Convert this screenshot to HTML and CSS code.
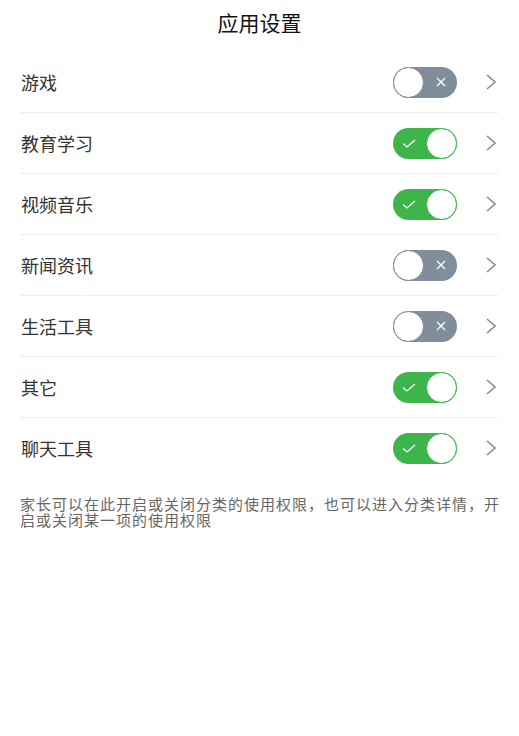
FILE: index.html
```html
<!DOCTYPE html>
<html lang="zh">
<head>
    <meta charset="UTF-8">
    <meta name="viewport" content="width=device-width, initial-scale=1.0">
    <title>应用设置</title>
    <link rel="stylesheet" href="styles.css">
</head>
<body>
    <h1 class="title">应用设置</h1>

    <div class="list">
        <div class="row">
            <span class="label">游戏</span>
            <span class="switch off"><span class="mark"><svg viewBox="0 0 10 10"><path d="M1 1 L9 9 M9 1 L1 9" /></svg></span><span class="knob"></span></span>
            <svg class="arrow" viewBox="0 0 10 16"><path d="M1 1 L9 8 L1 15" /></svg>
        </div>
        <div class="row">
            <span class="label">教育学习</span>
            <span class="switch on"><span class="mark"><svg viewBox="0 0 14 9"><path d="M1 4.5 L5 8 L13 1" /></svg></span><span class="knob"></span></span>
            <svg class="arrow" viewBox="0 0 10 16"><path d="M1 1 L9 8 L1 15" /></svg>
        </div>
        <div class="row">
            <span class="label">视频音乐</span>
            <span class="switch on"><span class="mark"><svg viewBox="0 0 14 9"><path d="M1 4.5 L5 8 L13 1" /></svg></span><span class="knob"></span></span>
            <svg class="arrow" viewBox="0 0 10 16"><path d="M1 1 L9 8 L1 15" /></svg>
        </div>
        <div class="row">
            <span class="label">新闻资讯</span>
            <span class="switch off"><span class="mark"><svg viewBox="0 0 10 10"><path d="M1 1 L9 9 M9 1 L1 9" /></svg></span><span class="knob"></span></span>
            <svg class="arrow" viewBox="0 0 10 16"><path d="M1 1 L9 8 L1 15" /></svg>
        </div>
        <div class="row">
            <span class="label">生活工具</span>
            <span class="switch off"><span class="mark"><svg viewBox="0 0 10 10"><path d="M1 1 L9 9 M9 1 L1 9" /></svg></span><span class="knob"></span></span>
            <svg class="arrow" viewBox="0 0 10 16"><path d="M1 1 L9 8 L1 15" /></svg>
        </div>
        <div class="row">
            <span class="label">其它</span>
            <span class="switch on"><span class="mark"><svg viewBox="0 0 14 9"><path d="M1 4.5 L5 8 L13 1" /></svg></span><span class="knob"></span></span>
            <svg class="arrow" viewBox="0 0 10 16"><path d="M1 1 L9 8 L1 15" /></svg>
        </div>
        <div class="row last">
            <span class="label">聊天工具</span>
            <span class="switch on"><span class="mark"><svg viewBox="0 0 14 9"><path d="M1 4.5 L5 8 L13 1" /></svg></span><span class="knob"></span></span>
            <svg class="arrow" viewBox="0 0 10 16"><path d="M1 1 L9 8 L1 15" /></svg>
        </div>
    </div>

    <p class="note">家长可以在此开启或关闭分类的使用权限，也可以进入分类详情，开启或关闭某一项的使用权限</p>
</body>
</html>
```

FILE: styles.css
```css
body {
    margin: 0;
    background: #fff;
    font-family: "Noto Sans CJK SC", "Noto Sans", sans-serif;
    color: #222;
}

.title {
    margin: 0;
    padding-top: 8px;
    height: 44px;
    line-height: 28px;
    font-size: 21px;
    font-weight: normal;
    text-align: center;
    color: #111;
}

.list {
    padding: 0 21px 0 20px;
}

.row {
    display: flex;
    align-items: center;
    height: 60px;
    border-bottom: 1px solid #eee;
}

.row.last {
    border-bottom: none;
}

.label {
    flex: 1;
    padding-left: 1px;
    font-size: 18px;
    color: #333;
}

.switch {
    position: relative;
    display: flex;
    align-items: center;
    width: 64px;
    height: 31px;
    border-radius: 16px;
    box-sizing: border-box;
}

.switch.off {
    background: #7f8e9a;
    justify-content: flex-end;
}

.switch.on {
    background: #3db54a;
    justify-content: flex-start;
}

.knob {
    position: absolute;
    top: 0;
    width: 31px;
    height: 31px;
    border-radius: 50%;
    background: #fff;
    box-sizing: border-box;
}

.switch.off .knob {
    left: 0;
    border: 1.5px solid #8a8a8a;
}

.switch.on .knob {
    right: 0;
    border: 1.5px solid #3db54a;
}

.mark {
    display: flex;
    align-items: center;
    justify-content: center;
    width: 32px;
    height: 31px;
}

.mark svg {
    fill: none;
    stroke: #fff;
    stroke-width: 1.3;
}

.switch.off .mark svg {
    width: 10px;
    height: 10px;
}

.switch.on .mark svg {
    width: 14px;
    height: 9px;
}

.arrow {
    width: 10px;
    height: 16px;
    margin-left: 29px;
    margin-right: 2px;
    fill: none;
    stroke: #8c8c8c;
    stroke-width: 1.6;
}

.note {
    margin: 18px 19px 0 20px;
    font-size: 15px;
    letter-spacing: 1px;
    line-height: 16px;
    color: #666;
}
```
